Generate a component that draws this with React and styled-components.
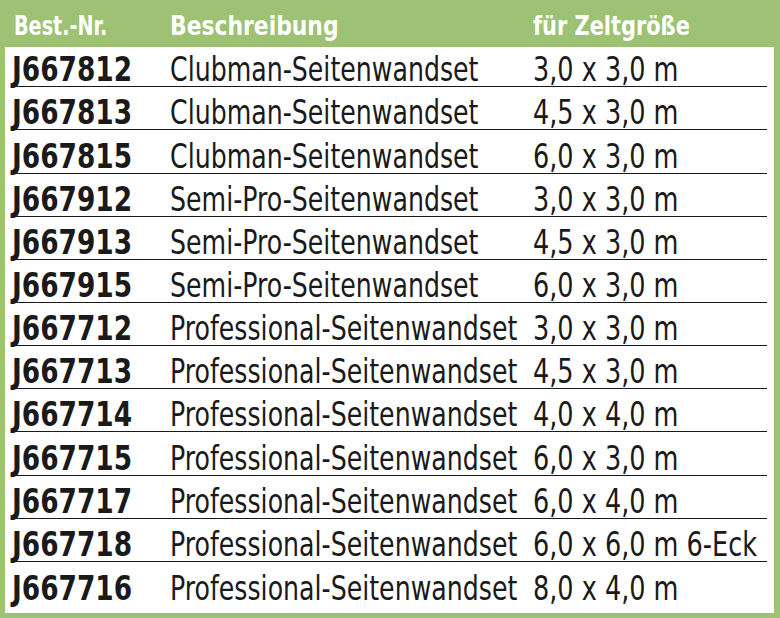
import React from 'react';
import styled, { createGlobalStyle } from 'styled-components';

const GlobalStyle = createGlobalStyle`
  html, body {
    margin: 0;
    padding: 0;
    background: #9dc273;
  }
`;

const rows = [
  ['J667812', 'Clubman-Seitenwandset', '3,0 x 3,0 m'],
  ['J667813', 'Clubman-Seitenwandset', '4,5 x 3,0 m'],
  ['J667815', 'Clubman-Seitenwandset', '6,0 x 3,0 m'],
  ['J667912', 'Semi-Pro-Seitenwandset', '3,0 x 3,0 m'],
  ['J667913', 'Semi-Pro-Seitenwandset', '4,5 x 3,0 m'],
  ['J667915', 'Semi-Pro-Seitenwandset', '6,0 x 3,0 m'],
  ['J667712', 'Professional-Seitenwandset', '3,0 x 3,0 m'],
  ['J667713', 'Professional-Seitenwandset', '4,5 x 3,0 m'],
  ['J667714', 'Professional-Seitenwandset', '4,0 x 4,0 m'],
  ['J667715', 'Professional-Seitenwandset', '6,0 x 3,0 m'],
  ['J667717', 'Professional-Seitenwandset', '6,0 x 4,0 m'],
  ['J667718', 'Professional-Seitenwandset', '6,0 x 6,0 m 6-Eck'],
  ['J667716', 'Professional-Seitenwandset', '8,0 x 4,0 m'],
];

const Frame = styled.div`
  width: 780px;
  height: 618px;
  box-sizing: border-box;
  background: #9dc273;
  padding: 0 6px 5px 5px;
  display: flex;
  flex-direction: column;
  font-family: "DejaVu Sans Condensed", "Liberation Sans", sans-serif;
`;

const Header = styled.div`
  height: 47px;
  box-sizing: border-box;
  padding: 4px 0 0 9px;
  display: grid;
  grid-template-columns: 156px 363px 1fr;
  align-items: center;
  color: #fff;
  font-size: 27px;
`;

const Body = styled.div`
  flex: 1;
  background: #fff;
  padding: 0 7px;
`;

const Row = styled.div`
  display: grid;
  grid-template-columns: 158px 363px 1fr;
  align-items: end;
  box-sizing: border-box;
  height: ${p => (p.$first ? 40.3 : 43.15)}px;
  border-bottom: ${p => (p.$last ? 'none' : '1px solid #1a1a1a')};
  color: #1a1a1a;
  font-size: 33px;
  line-height: 1;
`;

const Cell = styled.div`
  white-space: nowrap;
  font-weight: ${p => (p.$bold ? 'bold' : 'normal')};
`;

const Narrow = styled.span`
  display: inline-block;
  transform: scaleX(${p => p.$scale});
  transform-origin: left center;
`;

export default function App() {
  return (
    <>
      <GlobalStyle />
      <Frame>
        <Header>
          <Cell $bold><Narrow $scale={0.79}>Best.-Nr.</Narrow></Cell>
          <Cell $bold><Narrow $scale={0.9}>Beschreibung</Narrow></Cell>
          <Cell $bold><Narrow $scale={0.86}>für Zeltgröße</Narrow></Cell>
        </Header>
        <Body>
          {rows.map((r, i) => (
            <Row key={r[0]} $first={i === 0} $last={i === rows.length - 1}>
              <Cell $bold><Narrow $scale={0.89}>{r[0]}</Narrow></Cell>
              <Cell><Narrow $scale={0.85}>{r[1]}</Narrow></Cell>
              <Cell><Narrow $scale={0.86}>{r[2]}</Narrow></Cell>
            </Row>
          ))}
        </Body>
      </Frame>
    </>
  );
}
